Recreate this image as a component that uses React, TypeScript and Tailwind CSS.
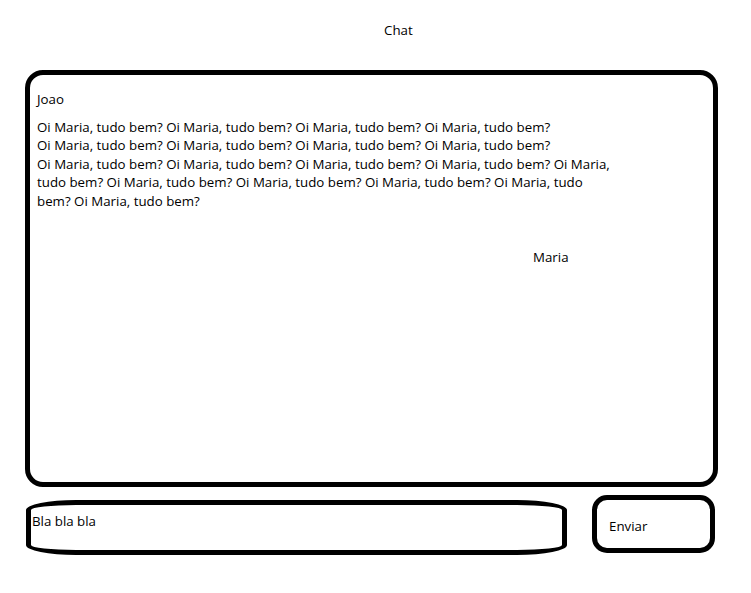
import { useState } from 'react'

const lines = [
  'Oi Maria, tudo bem? Oi Maria, tudo bem? Oi Maria, tudo bem? Oi Maria, tudo bem?',
  'Oi Maria, tudo bem? Oi Maria, tudo bem? Oi Maria, tudo bem? Oi Maria, tudo bem?',
  'Oi Maria, tudo bem? Oi Maria, tudo bem? Oi Maria, tudo bem? Oi Maria, tudo bem? Oi Maria,',
  'tudo bem? Oi Maria, tudo bem? Oi Maria, tudo bem? Oi Maria, tudo bem? Oi Maria, tudo',
  'bem? Oi Maria, tudo bem?',
]

export default function App() {
  const [draft] = useState('Bla bla bla')

  return (
    <div className="h-[593px] w-[751px] bg-white font-['Open_Sans',sans-serif] text-[13.3px] text-black">
      <div className="pl-[384px] pt-[21px] leading-[18px]">Chat</div>

      <div className="ml-[25px] mt-[31px] h-[417px] w-[693px] rounded-[18px] border-[5px] border-black px-[7px] pt-[15px]">
        <div className="leading-[18px]">Joao</div>
        <div className="mt-[10px] whitespace-nowrap leading-[18.4px]">
          {lines.map((l, i) => (
            <div key={i}>{l}</div>
          ))}
        </div>
        <div className="ml-[496px] mt-[38px] leading-[18px]">Maria</div>
      </div>

      <div className="mt-[8px] flex items-start">
        <div className="ml-[26px] mt-[5px] h-[55px] w-[541px] rounded-[50px/10px] border-[5px] border-black pl-[1px] pt-[7px] leading-[18px]">
          {draft}
        </div>
        <button
          type="button"
          className="ml-[25px] h-[58px] w-[123px] rounded-[15px] border-[5px] border-black pl-[12px] pt-[3px] text-left leading-[18px]"
        >
          Enviar
        </button>
      </div>
    </div>
  )
}
